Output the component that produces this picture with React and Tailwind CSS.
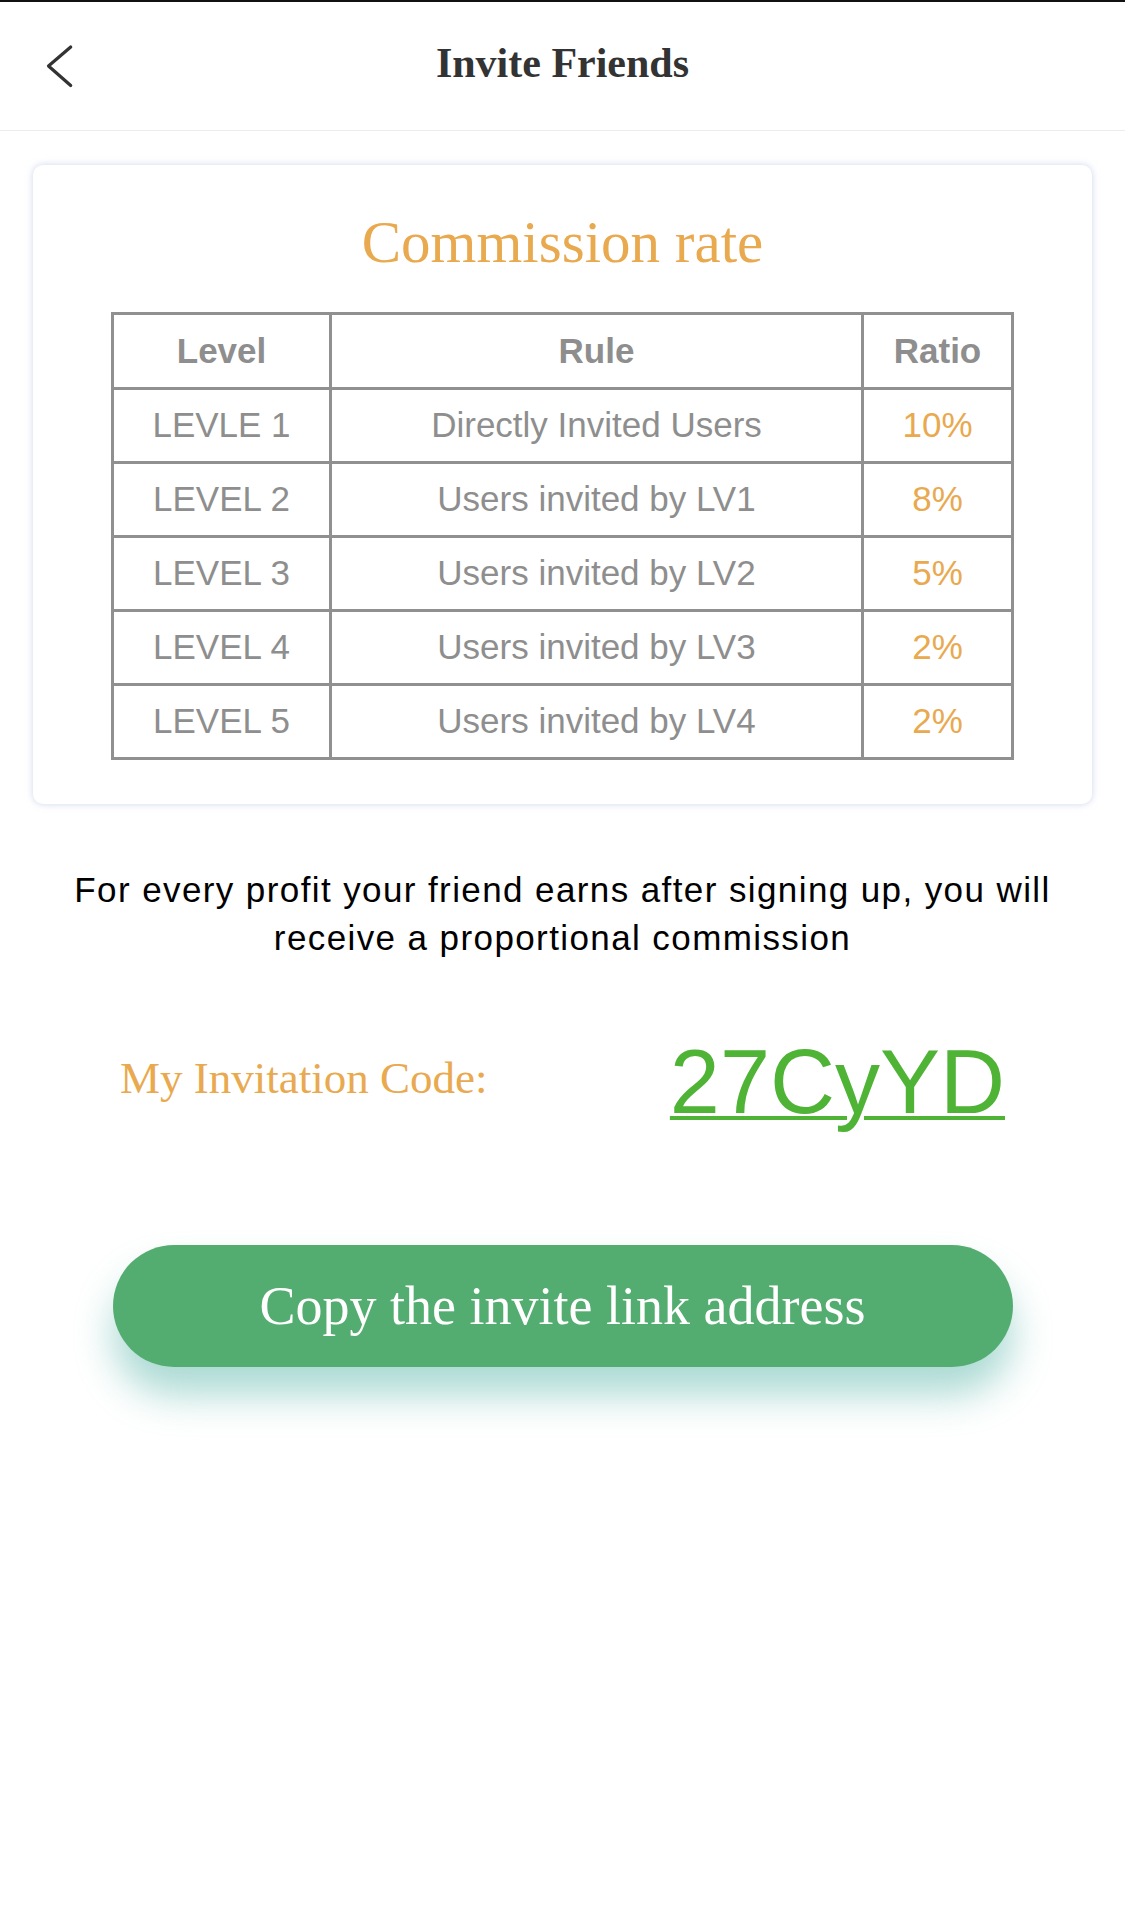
import { useState } from "react";

const levels = [
  { level: "LEVLE 1", rule: "Directly Invited Users", ratio: "10%" },
  { level: "LEVEL 2", rule: "Users invited by LV1", ratio: "8%" },
  { level: "LEVEL 3", rule: "Users invited by LV2", ratio: "5%" },
  { level: "LEVEL 4", rule: "Users invited by LV3", ratio: "2%" },
  { level: "LEVEL 5", rule: "Users invited by LV4", ratio: "2%" },
];

function BackArrow() {
  return (
    <svg width="28" height="46" viewBox="0 0 28 46" fill="none">
      <path
        d="M24.7 4 L2.5 23 L24.7 42.5"
        stroke="#333333"
        strokeWidth="3.2"
        strokeLinecap="round"
        strokeLinejoin="round"
      />
    </svg>
  );
}

export default function App() {
  const [code] = useState("27CyYD");

  return (
    <div className="min-h-[1920px] w-full bg-white border-t-2 border-[#111111]">
      {/* header */}
      <div className="grid h-[129px] grid-cols-[1fr_auto_1fr] items-center border-b border-[#ececec]">
        <button className="flex items-center pl-[46px]">
          <BackArrow />
        </button>
        <h1 className="pb-[6px] font-['Liberation_Serif',serif] text-[42px] font-bold leading-none text-[#333333]">
          Invite Friends
        </h1>
        <div />
      </div>

      {/* commission card */}
      <div className="mx-[33px] mt-[34px] rounded-[10px] bg-white pt-[48px] pb-[44px] shadow-[0_0_7px_rgba(175,185,220,0.6)]">
        <h2 className="text-center font-['Liberation_Serif',serif] text-[59px] leading-none text-[#E9A94F]">
          Commission rate
        </h2>
        <table className="mx-auto mt-[40px] w-[900px] table-fixed border-collapse font-['Liberation_Sans',Arial,sans-serif] text-[35px] text-[#8e8e8e]">
          <colgroup>
            <col className="w-[218px]" />
            <col className="w-[532px]" />
            <col className="w-[150px]" />
          </colgroup>
          <thead>
            <tr className="h-[75px]">
              <th className="border-[3px] border-[#909090] text-center font-bold">Level</th>
              <th className="border-[3px] border-[#909090] text-center font-bold">Rule</th>
              <th className="border-[3px] border-[#909090] text-center font-bold">Ratio</th>
            </tr>
          </thead>
          <tbody>
            {levels.map((row) => (
              <tr key={row.level} className="h-[74px]">
                <td className="border-[3px] border-[#909090] text-center">{row.level}</td>
                <td className="border-[3px] border-[#909090] text-center">{row.rule}</td>
                <td className="border-[3px] border-[#909090] text-center text-[#E9A94F]">{row.ratio}</td>
              </tr>
            ))}
          </tbody>
        </table>
      </div>

      {/* description */}
      <p className="mt-[62px] px-[50px] text-center font-['Liberation_Sans',Arial,sans-serif] text-[35px] leading-[48px] tracking-[1.4px] text-black">
        For every profit your friend earns after signing up, you will receive a proportional commission
      </p>

      {/* invitation code */}
      <div className="mt-[75px] flex items-center justify-between px-[120px]">
        <span className="pb-[7px] font-['Liberation_Serif',serif] text-[45px] leading-none text-[#E9A94F]">
          My Invitation Code:
        </span>
        <span className="font-['Liberation_Sans',Arial,sans-serif] text-[90px] leading-none text-[#4FB336] underline decoration-[4px] underline-offset-[3px]">
          {code}
        </span>
      </div>

      {/* copy button */}
      <button className="mx-auto mt-[118px] flex h-[122px] w-[900px] items-center justify-center rounded-full bg-[#54AD70] font-['Liberation_Serif',serif] text-[54px] leading-none text-white shadow-[0_28px_38px_rgba(70,172,160,0.45)]">
        Copy the invite link address
      </button>
    </div>
  );
}
